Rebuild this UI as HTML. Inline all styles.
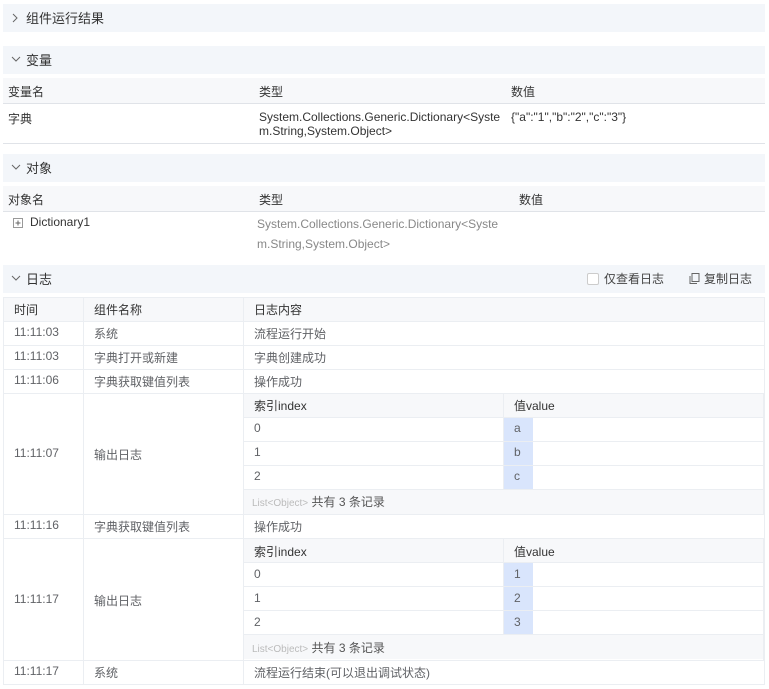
<!DOCTYPE html>
<html><head><meta charset="utf-8"><style>
*{margin:0;padding:0;box-sizing:border-box}
body{width:769px;height:689px;background:#fff;font-family:"Liberation Sans","Noto Sans CJK SC",sans-serif;font-size:12px;color:#333;position:relative;overflow:hidden}
.a{position:absolute;white-space:nowrap}
.hd{position:absolute;left:3px;width:762px;height:28px;background:#f3f6fa;font-size:13px;color:#333}
.hd span{position:absolute;left:23px;top:4px}
.hd svg{position:absolute;left:8px;top:9px}
.th{position:absolute;left:3px;width:762px;height:26px;background:#f7f8fa;border-bottom:1px solid #e0e3e8}
.g{color:#888}
.lt{position:absolute;left:3px;top:297px;width:762px;height:388px;border:1px solid #ebeef2;border-bottom:none}
.hl{position:absolute;height:1px;background:#ebeef2}
.vl{position:absolute;width:1px;background:#ebeef2}
.t{color:#606266}
</style></head><body>
<div class="hd" style="top:4px"><svg width="8" height="10" viewBox="0 0 8 10"><path d="M2 1l4 4-4 4" fill="none" stroke="#666" stroke-width="1"/></svg><span>组件运行结果</span></div>

<div class="hd" style="top:46px"><svg width="10" height="8" viewBox="0 0 10 8"><path d="M1 2l4 4 4-4" fill="none" stroke="#666" stroke-width="1"/></svg><span>变量</span></div>
<div class="th" style="top:78px"></div>
<div class="a" style="left:8px;top:83px">变量名</div>
<div class="a" style="left:259px;top:83px">类型</div>
<div class="a" style="left:511px;top:83px">数值</div>
<div class="a" style="left:8px;top:110px">字典</div>
<div class="a" style="left:259px;top:110px;line-height:14px">System.Collections.Generic.Dictionary&lt;Syste<br>m.String,System.Object&gt;</div>
<div class="a" style="left:511px;top:110px">{"a":"1","b":"2","c":"3"}</div>
<div class="hl" style="left:3px;top:143px;width:762px;background:#e0e3e8"></div>

<div class="hd" style="top:154px"><svg width="10" height="8" viewBox="0 0 10 8"><path d="M1 2l4 4 4-4" fill="none" stroke="#666" stroke-width="1"/></svg><span>对象</span></div>
<div class="th" style="top:186px"></div>
<div class="a" style="left:8px;top:191px">对象名</div>
<div class="a" style="left:259px;top:191px">类型</div>
<div class="a" style="left:519px;top:191px">数值</div>
<svg class="a" style="left:13px;top:218px" width="10" height="10" viewBox="0 0 10 10"><rect x=".5" y=".5" width="9" height="9" fill="#fff" stroke="#999"/><path d="M2.5 5h5M5 2.5v5" stroke="#666"/></svg>
<div class="a" style="left:30px;top:215px">Dictionary1</div>
<div class="a g" style="left:257px;top:214px;line-height:20px">System.Collections.Generic.Dictionary&lt;Syste<br>m.String,System.Object&gt;</div>

<div class="hd" style="top:265px"><svg width="10" height="8" viewBox="0 0 10 8"><path d="M1 2l4 4 4-4" fill="none" stroke="#666" stroke-width="1"/></svg><span>日志</span>
<div class="a" style="left:584px;top:8px;width:12px;height:12px;border:1px solid #ccc;border-radius:2px;background:#fff"></div>
<div class="a" style="left:601px;top:5px;font-size:12px;color:#444">仅查看日志</div>
<svg class="a" style="left:686px;top:8px" width="11" height="11" viewBox="0 0 11 11"><rect x="3" y=".5" width="7" height="8" fill="none" stroke="#666"/><path d="M1 3v7.5h7" fill="none" stroke="#666"/></svg>
<div class="a" style="left:701px;top:5px;font-size:12px;color:#444">复制日志</div>
</div>

<div class="lt"></div>
<div class="a" style="left:4px;top:298px;width:760px;height:23px;background:#f7f8fa"></div>
<div class="a" style="left:244px;top:394px;width:520px;height:23px;background:#f7f8fa"></div>
<div class="a" style="left:244px;top:490px;width:520px;height:24px;background:#f7f8fa"></div>
<div class="a" style="left:244px;top:539px;width:520px;height:23px;background:#f7f8fa"></div>
<div class="a" style="left:244px;top:635px;width:520px;height:24px;background:#f7f8fa"></div>
<div class="a" style="left:504px;top:418px;width:29px;height:71px;background:#d9e5fc"></div>
<div class="a" style="left:504px;top:563px;width:29px;height:71px;background:#d9e5fc"></div>

<div class="hl" style="left:3px;top:321px;width:762px"></div>
<div class="hl" style="left:3px;top:345px;width:762px"></div>
<div class="hl" style="left:3px;top:369px;width:762px"></div>
<div class="hl" style="left:3px;top:393px;width:762px"></div>
<div class="hl" style="left:243px;top:417px;width:521px"></div>
<div class="hl" style="left:243px;top:441px;width:521px"></div>
<div class="hl" style="left:243px;top:465px;width:521px"></div>
<div class="hl" style="left:243px;top:489px;width:521px"></div>
<div class="hl" style="left:3px;top:514px;width:762px"></div>
<div class="hl" style="left:3px;top:538px;width:762px"></div>
<div class="hl" style="left:243px;top:562px;width:521px"></div>
<div class="hl" style="left:243px;top:586px;width:521px"></div>
<div class="hl" style="left:243px;top:610px;width:521px"></div>
<div class="hl" style="left:243px;top:634px;width:521px"></div>
<div class="hl" style="left:3px;top:660px;width:762px"></div>
<div class="hl" style="left:3px;top:684px;width:762px"></div>
<div class="vl" style="left:83px;top:297px;height:388px"></div>
<div class="vl" style="left:243px;top:297px;height:388px"></div>
<div class="vl" style="left:503px;top:393px;height:96px"></div>
<div class="vl" style="left:503px;top:538px;height:96px"></div>
<div class="vl" style="left:763px;top:393px;height:121px"></div>
<div class="vl" style="left:763px;top:538px;height:122px"></div>

<div class="a" style="left:14px;top:301px">时间</div>
<div class="a" style="left:94px;top:301px">组件名称</div>
<div class="a" style="left:254px;top:301px">日志内容</div>

<div class="a t" style="left:14px;top:325px">11:11:03</div><div class="a t" style="left:94px;top:325px">系统</div><div class="a t" style="left:254px;top:325px">流程运行开始</div>
<div class="a t" style="left:14px;top:349px">11:11:03</div><div class="a t" style="left:94px;top:349px">字典打开或新建</div><div class="a t" style="left:254px;top:349px">字典创建成功</div>
<div class="a t" style="left:14px;top:373px">11:11:06</div><div class="a t" style="left:94px;top:373px">字典获取键值列表</div><div class="a t" style="left:254px;top:373px">操作成功</div>
<div class="a t" style="left:14px;top:446px">11:11:07</div><div class="a t" style="left:94px;top:446px">输出日志</div>
<div class="a" style="left:254px;top:397px">索引index</div><div class="a" style="left:514px;top:397px">值value</div>
<div class="a t" style="left:254px;top:421px">0</div><div class="a t" style="left:514px;top:421px">a</div>
<div class="a t" style="left:254px;top:445px">1</div><div class="a t" style="left:514px;top:445px">b</div>
<div class="a t" style="left:254px;top:469px">2</div><div class="a t" style="left:514px;top:469px">c</div>
<div class="a" style="left:252px;top:493px"><span style="color:#bbb;font-size:10px">List&lt;Object&gt;</span> <span style="color:#555">共有 3 条记录</span></div>

<div class="a t" style="left:14px;top:518px">11:11:16</div><div class="a t" style="left:94px;top:518px">字典获取键值列表</div><div class="a t" style="left:254px;top:518px">操作成功</div>
<div class="a t" style="left:14px;top:592px">11:11:17</div><div class="a t" style="left:94px;top:592px">输出日志</div>
<div class="a" style="left:254px;top:543px">索引index</div><div class="a" style="left:514px;top:543px">值value</div>
<div class="a t" style="left:254px;top:567px">0</div><div class="a t" style="left:514px;top:567px">1</div>
<div class="a t" style="left:254px;top:591px">1</div><div class="a t" style="left:514px;top:591px">2</div>
<div class="a t" style="left:254px;top:615px">2</div><div class="a t" style="left:514px;top:615px">3</div>
<div class="a" style="left:252px;top:639px"><span style="color:#bbb;font-size:10px">List&lt;Object&gt;</span> <span style="color:#555">共有 3 条记录</span></div>
<div class="a t" style="left:14px;top:664px">11:11:17</div><div class="a t" style="left:94px;top:664px">系统</div><div class="a t" style="left:254px;top:664px">流程运行结束(可以退出调试状态)</div>
</body></html>
